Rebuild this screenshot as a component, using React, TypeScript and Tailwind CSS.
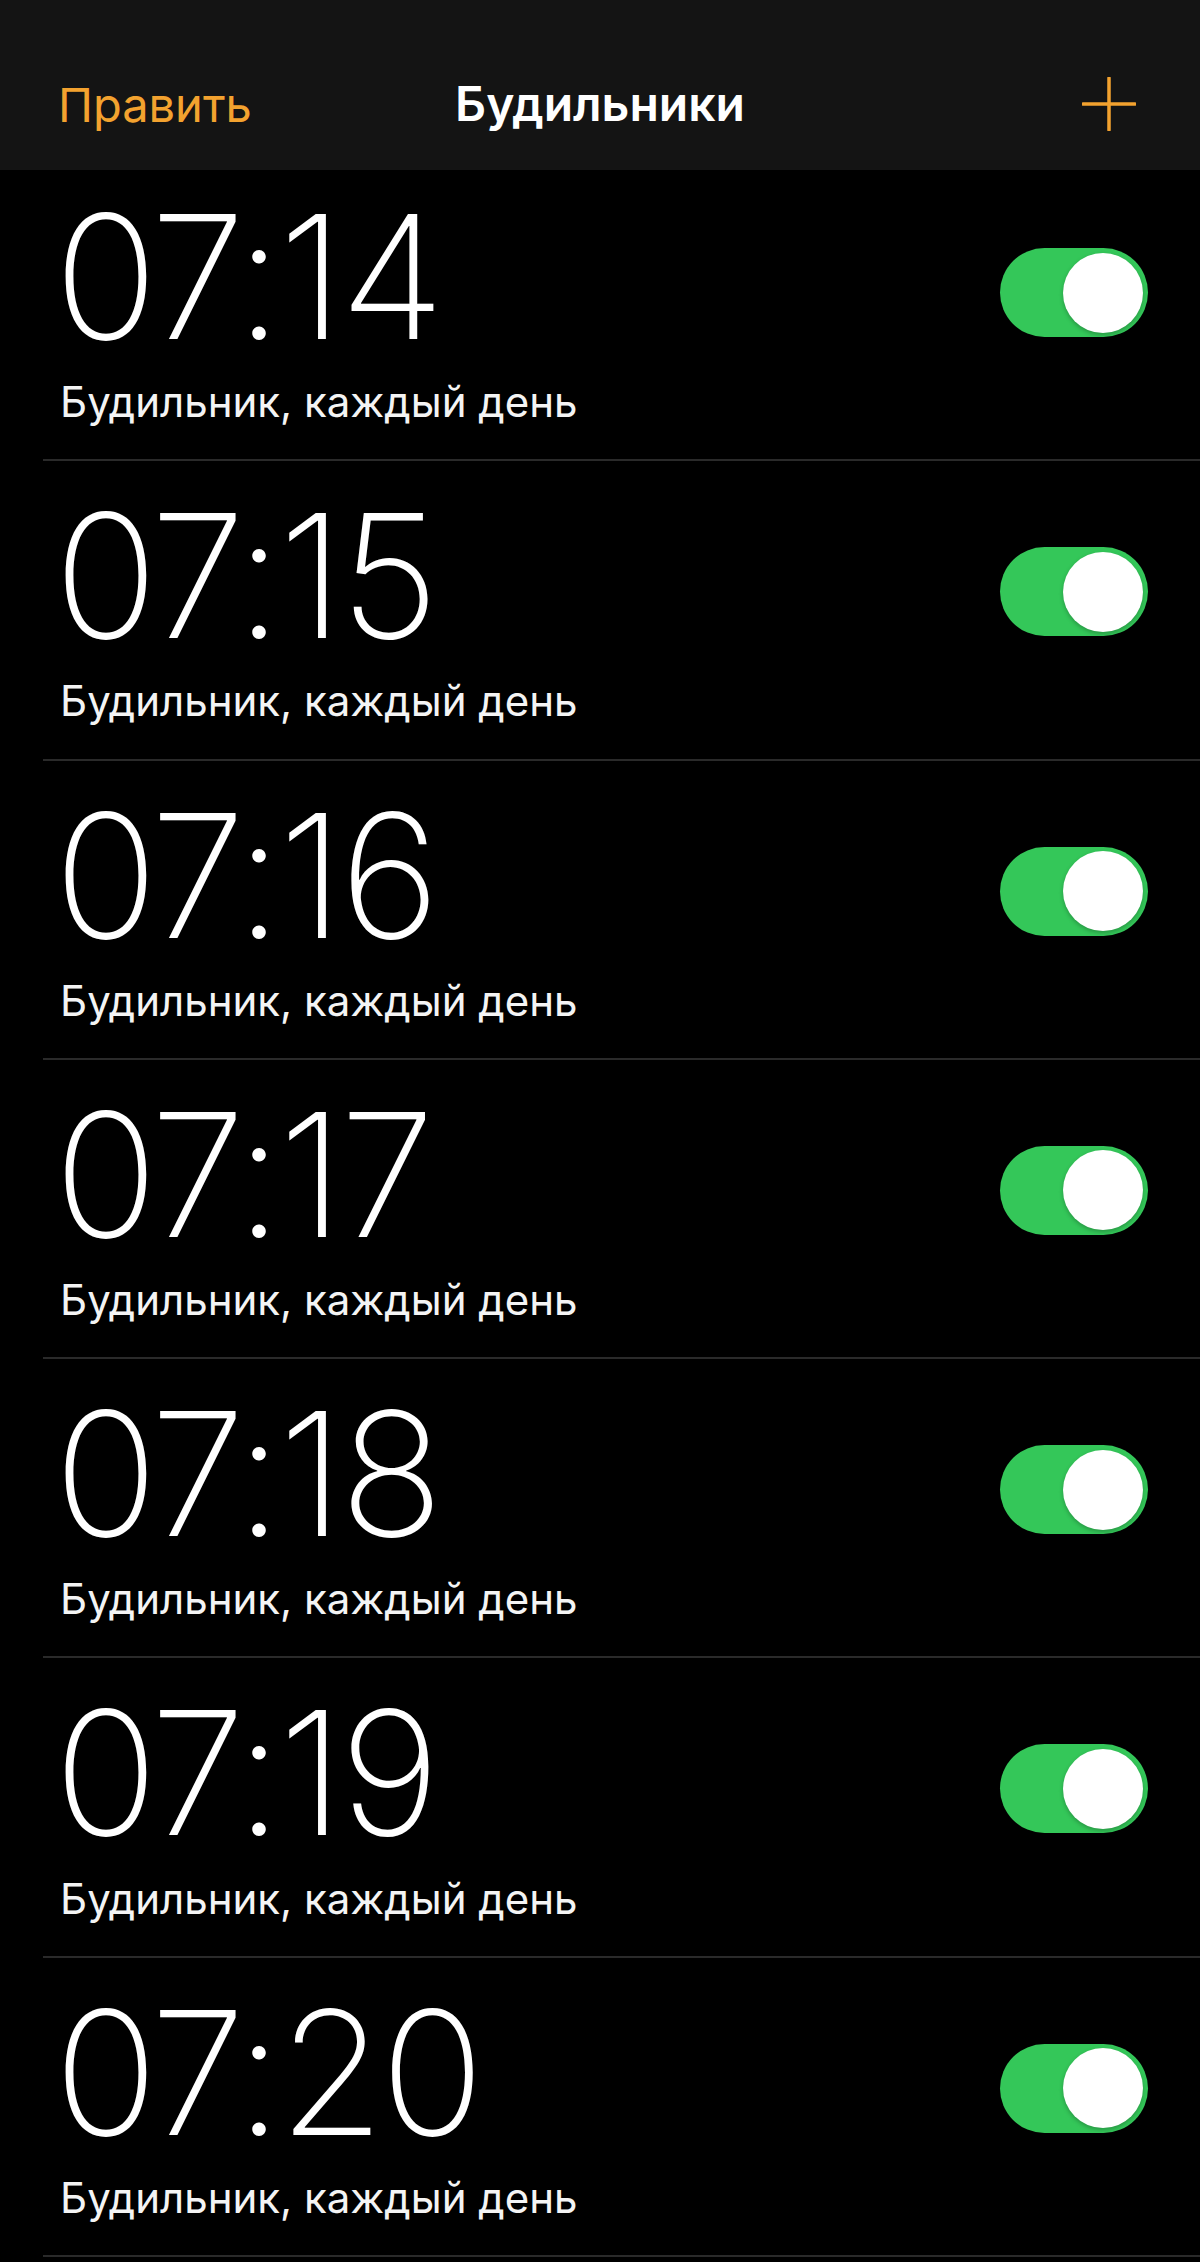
const alarms = ['07:14', '07:15', '07:16', '07:17', '07:18', '07:19', '07:20'];

function Toggle() {
  return (
    <div className="mt-[86px] flex h-[89px] w-[148px] shrink-0 items-center justify-end rounded-full bg-[#34c759] pr-[5px]">
      <div className="h-[80px] w-[80px] rounded-full bg-white shadow-[0_2px_4px_rgba(0,0,0,0.25)]" />
    </div>
  );
}

function AlarmRow({ time, first }: { time: string; first?: boolean }) {
  return (
    <div className={`relative flex h-[299.3px] items-start justify-between pl-[54px] pr-[52px] ${first ? '-mt-[8px]' : ''}`}>
      <div className="flex flex-col">
        <div className="pt-[20px] text-[172px] font-extralight leading-[1.1] tracking-[-0.025em] text-white">{time}</div>
        <div className="mt-[10px] pl-[6px] text-[42px] leading-none text-[#f4f4f4]">Будильник, каждый день</div>
      </div>
      <Toggle />
      <div className="absolute bottom-0 left-[43px] right-0 h-[2px] bg-[#2a2a2a]" />
    </div>
  );
}

export default function App() {
  return (
    <div className="min-h-[2262px] w-[1200px] overflow-hidden bg-black font-['Inter','Noto_Sans',sans-serif]">
      <div className="relative z-10 h-[170px] bg-[#141414] pt-[60px]">
        <div className="grid h-[88px] grid-cols-3 items-center px-[58px]">
          <span className="justify-self-start text-[47px] leading-none text-[#f3a22f]">Править</span>
          <span className="justify-self-center text-[48px] font-semibold leading-none text-white">Будильники</span>
          <svg width="54" height="54" viewBox="0 0 54 54" className="mr-[6px] justify-self-end">
            <path d="M27 1v52M1 27h52" stroke="#f3a22f" strokeWidth="3.5" strokeLinecap="round" />
          </svg>
        </div>
      </div>
      <div>
        {alarms.map((t, i) => (
          <AlarmRow key={t} time={t} first={i === 0} />
        ))}
      </div>
    </div>
  );
}
